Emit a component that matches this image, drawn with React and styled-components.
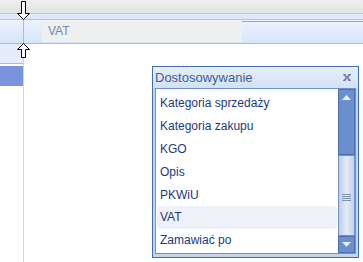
import React from "react";
import styled, { createGlobalStyle } from "styled-components";

const Global = createGlobalStyle`
  html, body { margin: 0; padding: 0; background: #fff; }
  body { font-family: "Liberation Sans", Arial, sans-serif; }
`;

const Page = styled.div`
  position: relative;
  width: 363px;
  height: 262px;
  overflow: hidden;
  background: #fff;
  display: flex;
  flex-direction: column;
`;

const TopBar = styled.div`
  height: 13px;
  flex: none;
  background: linear-gradient(#eeeeee, #e3e3e3);
  border-bottom: 1px solid #c9c9c9;
`;

const Band = styled.div`
  height: 5px;
  flex: none;
  background: #dde8fa;
`;

const HeaderRow = styled.div`
  height: 23px;
  flex: none;
  display: flex;
  border-top: 1px solid #b4c5dc;
  border-bottom: 1px solid #a2badb;
  background: linear-gradient(#ecf3fe, #d6e5fa);
`;

const CornerCell = styled.div`
  width: 23px;
  flex: none;
  border-right: 1px solid #a9bdd7;
`;

const Gap = styled.div`
  width: ${(p) => p.$w}px;
  flex: none;
`;

const DragCell = styled.div`
  width: 200px;
  flex: none;
  background: #eef0ef;
  border-bottom-right-radius: 2px;
  display: flex;
  align-items: center;
  padding-left: 6px;
  box-sizing: border-box;
  color: #6d88b8;
  font-size: 12px;
  margin-bottom: 1px;
`;

const HeaderRest = styled.div`
  flex: 1;
  border-top: 1px solid #8fa8cc;
  margin-top: 1px;
`;

const Body = styled.div`
  flex: 1;
  display: flex;
`;

const RowHeaders = styled.div`
  width: 23px;
  flex: none;
  border-right: 1px solid #c6d7ee;
  display: flex;
  flex-direction: column;
`;

const RowHeaderTop = styled.div`
  height: 19px;
  background: #e4edfc;
  border-bottom: 1px solid #a9bed9;
`;

const SelectedRowHeader = styled.div`
  height: 20px;
  margin-top: 2px;
  background: #7b93dd;
`;

const Arrow = styled.svg`
  position: absolute;
  left: 17px;
  top: ${(p) => p.$top}px;
`;

const Dialog = styled.div`
  position: absolute;
  left: 152px;
  top: 66px;
  width: 207px;
  height: 192px;
  box-sizing: border-box;
  border: 1px solid #3f6fb3;
  background: #c2d4ee;
  display: flex;
  flex-direction: column;
`;

const TitleBar = styled.div`
  height: 21px;
  flex: none;
  display: flex;
  align-items: center;
  justify-content: space-between;
  padding: 0 7px 0 2px;
  background: linear-gradient(#e7effa, #d3e1f4);
  color: #3d5f96;
  font-size: 13px;
`;

const ListFrame = styled.div`
  flex: 1;
  padding: 0 2px 3px 2px;
  display: flex;
  min-height: 0;
`;

const ListBox = styled.div`
  flex: 1;
  display: flex;
  border: 1px solid #6e92c9;
  background: #fff;
`;

const Items = styled.div`
  flex: 1;
  padding: 3px 1px 0 1px;
`;

const Item = styled.div`
  height: 22.8px;
  display: flex;
  align-items: center;
  padding-left: 3px;
  font-size: 12px;
  color: #1b3a79;
  border-radius: 4px;
  background: ${(p) => (p.$active ? "#eef2f8" : "transparent")};
`;

const Scrollbar = styled.div`
  width: 17px;
  flex: none;
  display: flex;
  flex-direction: column;
`;

const ScrollBlue = styled.div`
  flex: ${(p) => (p.$grow ? 1 : "none")};
  height: ${(p) => (p.$grow ? "auto" : "17px")};
  background: #6b8fcc;
  border: 1px solid #4a71b1;
  box-sizing: border-box;
  display: flex;
  justify-content: center;
  align-items: ${(p) => (p.$grow ? "flex-start" : "center")};
  padding-top: ${(p) => (p.$grow ? "5px" : "0")};
`;

const Thumb = styled.div`
  height: 81px;
  flex: none;
  box-sizing: border-box;
  border: 1px solid #6f90c8;
  background: linear-gradient(90deg, #bccde8, #e4ebf6 50%, #c3d2eb);
  display: flex;
  align-items: center;
  justify-content: center;
`;

const Grip = styled.div`
  width: 9px;
  display: flex;
  flex-direction: column;
  gap: 1px;
  margin-top: 4px;
`;

const GripLine = styled.div`
  height: 1px;
  background: #7d90ae;
`;

const items = [
  "Kategoria sprzedaży",
  "Kategoria zakupu",
  "KGO",
  "Opis",
  "PKWiU",
  "VAT",
  "Zamawiać po",
];

export default function App() {
  return (
    <Page>
      <Global />
      <TopBar />
      <Band />
      <HeaderRow>
        <CornerCell />
        <Gap $w={18} />
        <DragCell>VAT</DragCell>
        <HeaderRest />
      </HeaderRow>
      <Body>
        <RowHeaders>
          <RowHeaderTop />
          <SelectedRowHeader />
        </RowHeaders>
      </Body>

      <Arrow $top={1} width="13" height="19" viewBox="0 0 13 19">
        <path d="M4.5 0.5H8.5V12.5H12.5L6.5 18.5L0.5 12.5H4.5Z" fill="#fff" stroke="#000" />
      </Arrow>
      <Arrow $top={43} width="13" height="15" viewBox="0 0 13 15">
        <path d="M6.5 0.5L12.5 6.5H8.5V14.5H4.5V6.5H0.5Z" fill="#fff" stroke="#000" />
      </Arrow>

      <Dialog>
        <TitleBar>
          <span>Dostosowywanie</span>
          <svg width="8" height="7" viewBox="0 0 8 7">
            <path d="M1 0.5L7 6.5M7 0.5L1 6.5" stroke="#7489aa" strokeWidth="1.8" />
            <path d="M0 0.5H3M5 0.5H8M0 6.5H3M5 6.5H8" stroke="#7489aa" strokeWidth="1" />
          </svg>
        </TitleBar>
        <ListFrame>
          <ListBox>
            <Items>
              {items.map((t) => (
                <Item key={t} $active={t === "VAT"}>
                  {t}
                </Item>
              ))}
            </Items>
            <Scrollbar>
              <ScrollBlue $grow>
                <svg width="9" height="5" viewBox="0 0 9 5">
                  <path d="M4.5 0L9 5H0Z" fill="#e8eff9" />
                </svg>
              </ScrollBlue>
              <Thumb>
                <Grip>
                  <GripLine />
                  <GripLine />
                  <GripLine />
                  <GripLine />
                </Grip>
              </Thumb>
              <ScrollBlue>
                <svg width="9" height="5" viewBox="0 0 9 5">
                  <path d="M0 0H9L4.5 5Z" fill="#e8eff9" />
                </svg>
              </ScrollBlue>
            </Scrollbar>
          </ListBox>
        </ListFrame>
      </Dialog>
    </Page>
  );
}
